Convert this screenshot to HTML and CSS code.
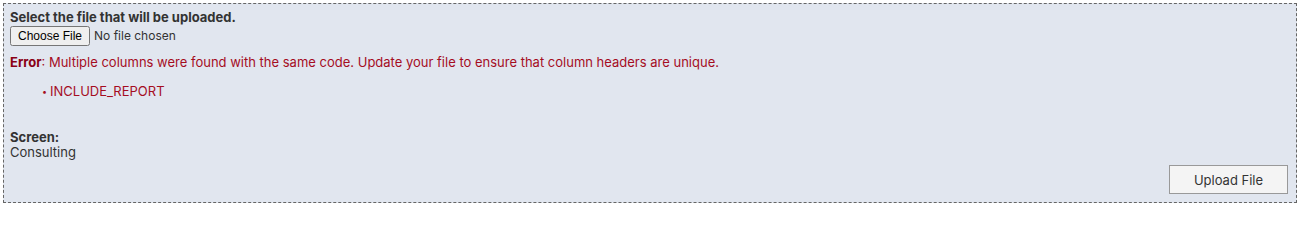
FILE: index.html
```html
<!DOCTYPE html>
<html>
<head>
<meta charset="utf-8">
<link rel="stylesheet" href="styles.css">
</head>
<body>
<div class="panel">
  <div class="label">Select the file that will be uploaded.</div>
  <input type="file" class="file">
  <p class="error"><b>Error</b>: Multiple columns were found with the same code. Update your file to ensure that column headers are unique.</p>
  <ul class="errors">
    <li>INCLUDE_REPORT</li>
  </ul>
  <div class="screen">
    <div class="label">Screen:</div>
    <div class="value">Consulting</div>
  </div>
  <div class="actions">
    <button class="upload">Upload File</button>
  </div>
</div>
</body>
</html>
```
FILE: styles.css
```css
html, body {
  margin: 0;
  padding: 0;
  background: #fff;
}
body {
  font-family: Inter, "Liberation Sans", sans-serif;
  font-size: 13px;
  color: #333;
}
.panel {
  margin: 3px;
  border: 1px dashed #666;
  background: #e1e6ef;
  padding: 5px 8px 8px 6px;
  height: 185px;
  display: flex;
  flex-direction: column;
}
.label {
  font-weight: bold;
  line-height: 16px;
}
.file {
  font-family: Inter, "Liberation Sans", sans-serif;
  font-size: 12px;
  margin: 1px 0 0 0;
  color: #333;
  align-self: flex-start;
}
.file::file-selector-button {
  font-family: "Liberation Sans", Arial, sans-serif;
  font-size: 12px;
}
.error {
  color: #a50d1f;
  margin: 8px 0 0 0;
  line-height: 16px;
}
.error b {
  color: #8a0014;
}
.errors {
  color: #a50d1f;
  margin: 13px 0 0 0;
  padding-left: 32px;
  line-height: 16px;
  list-style: none;
}
.errors li::before {
  content: "•";
  display: inline-block;
  width: 8px;
  font-size: 9px;
  vertical-align: 1px;
}
.screen {
  margin-top: 29px;
  line-height: 15px;
}
.actions {
  margin-top: auto;
  display: flex;
  justify-content: flex-end;
}
.upload {
  font-family: Inter, "Liberation Sans", sans-serif;
  font-size: 13px;
  color: #333;
  width: 119px;
  height: 29px;
  background: #f4f4f4;
  border: 1px solid #999;
  border-radius: 0;
}
```
